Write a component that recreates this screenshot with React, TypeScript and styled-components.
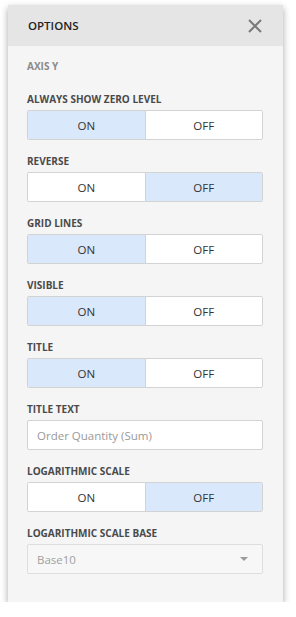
import React from 'react'
import styled, { createGlobalStyle } from 'styled-components'

/*---> Data <---*/
type Item =
  | { kind: 'toggle'; label: string; on: boolean }
  | { kind: 'text'; label: string; placeholder: string }
  | { kind: 'select'; label: string; value: string }

const items: Item[] = [
  { kind: 'toggle', label: 'ALWAYS SHOW ZERO LEVEL', on: true },
  { kind: 'toggle', label: 'REVERSE', on: false },
  { kind: 'toggle', label: 'GRID LINES', on: true },
  { kind: 'toggle', label: 'VISIBLE', on: true },
  { kind: 'toggle', label: 'TITLE', on: true },
  { kind: 'text', label: 'TITLE TEXT', placeholder: 'Order Quantity (Sum)' },
  { kind: 'toggle', label: 'LOGARITHMIC SCALE', on: false },
  { kind: 'select', label: 'LOGARITHMIC SCALE BASE', value: 'Base10' },
]

/*---> Component <---*/
const App = () => {
  return (
    <>
      <GlobalStyle />
      <Panel>
        <Header>
          <HeaderTitle>OPTIONS</HeaderTitle>
          <CloseButton aria-label="Close">
            <svg width="14" height="14" viewBox="0 0 14 14">
              <path d="M1 1 L13 13 M13 1 L1 13" stroke="#7a7a7a" strokeWidth="2" fill="none" />
            </svg>
          </CloseButton>
        </Header>
        <Body>
          <SectionTitle>AXIS Y</SectionTitle>
          {items.map((item) => (
            <Group key={item.label}>
              <Label>{item.label}</Label>
              {item.kind === 'toggle' && (
                <Toggle>
                  <Segment $active={item.on}>ON</Segment>
                  <Segment $active={!item.on}>OFF</Segment>
                </Toggle>
              )}
              {item.kind === 'text' && <TextBox placeholder={item.placeholder} />}
              {item.kind === 'select' && (
                <SelectBox>
                  <span>{item.value}</span>
                  <Caret />
                </SelectBox>
              )}
            </Group>
          ))}
        </Body>
      </Panel>
    </>
  )
}

export default App

/*---> Styles <---*/
const GlobalStyle = createGlobalStyle`
  body {
    margin: 0;
    background: #ffffff;
    font-family: 'Open Sans', 'Noto Sans', sans-serif;
  }
`

const Panel = styled.div`
  margin: 5px 0 0 8px;
  width: 275px;
  height: 597px;
  background: #f5f5f5;
  box-shadow: 0 3px 7px rgba(0, 0, 0, 0.35);
  display: flex;
  flex-direction: column;
`

const Header = styled.div`
  height: 41px;
  background: #e5e5e5;
  padding: 0 20px 0 20px;
  display: flex;
  align-items: center;
  justify-content: space-between;
`

const HeaderTitle = styled.div`
  font-size: 11.5px;
  font-weight: 600;
  color: #222;
`

const CloseButton = styled.div`
  display: flex;
  margin-right: 1px;
`

const Body = styled.div`
  padding: 13px 20px 0 19px;
  display: flex;
  flex-direction: column;
`

const SectionTitle = styled.div`
  font-size: 10px;
  font-weight: 700;
  line-height: 14px;
  color: #8a8a8a;
  margin-bottom: 19px;
`

const Group = styled.div`
  display: flex;
  flex-direction: column;
  margin-bottom: 14px;
`

const Label = styled.div`
  font-size: 10px;
  font-weight: 700;
  line-height: 14px;
  color: #4a4a4a;
  margin-bottom: 4px;
  white-space: nowrap;
`

const Toggle = styled.div`
  display: flex;
  height: 30px;
  box-sizing: border-box;
  border: 1px solid #d3d3d3;
  border-radius: 2px;
  overflow: hidden;
`

const Segment = styled.div<{ $active: boolean }>`
  flex: 1;
  display: flex;
  align-items: center;
  justify-content: center;
  font-size: 11.5px;
  color: #333;
  background: ${(p) => (p.$active ? '#dae8fb' : '#ffffff')};

  & + & {
    border-left: 1px solid #d3d3d3;
  }
`

const TextBox = styled.input`
  height: 30px;
  box-sizing: border-box;
  border: 1px solid #d3d3d3;
  border-radius: 2px;
  padding: 0 9px;
  font-family: inherit;
  font-size: 11.5px;
  color: #333;
  background: #fff;
  outline: none;

  &::placeholder {
    color: #999;
  }
`

const SelectBox = styled.div`
  height: 30px;
  box-sizing: border-box;
  border: 1px solid #dedede;
  border-radius: 2px;
  padding: 0 14px 0 9px;
  display: flex;
  align-items: center;
  justify-content: space-between;
  font-size: 11.5px;
  color: #a0a0a0;
  background: #f7f7f7;
`

const Caret = styled.span`
  width: 0;
  height: 0;
  border-left: 4px solid transparent;
  border-right: 4px solid transparent;
  border-top: 4px solid #9a9a9a;
`
